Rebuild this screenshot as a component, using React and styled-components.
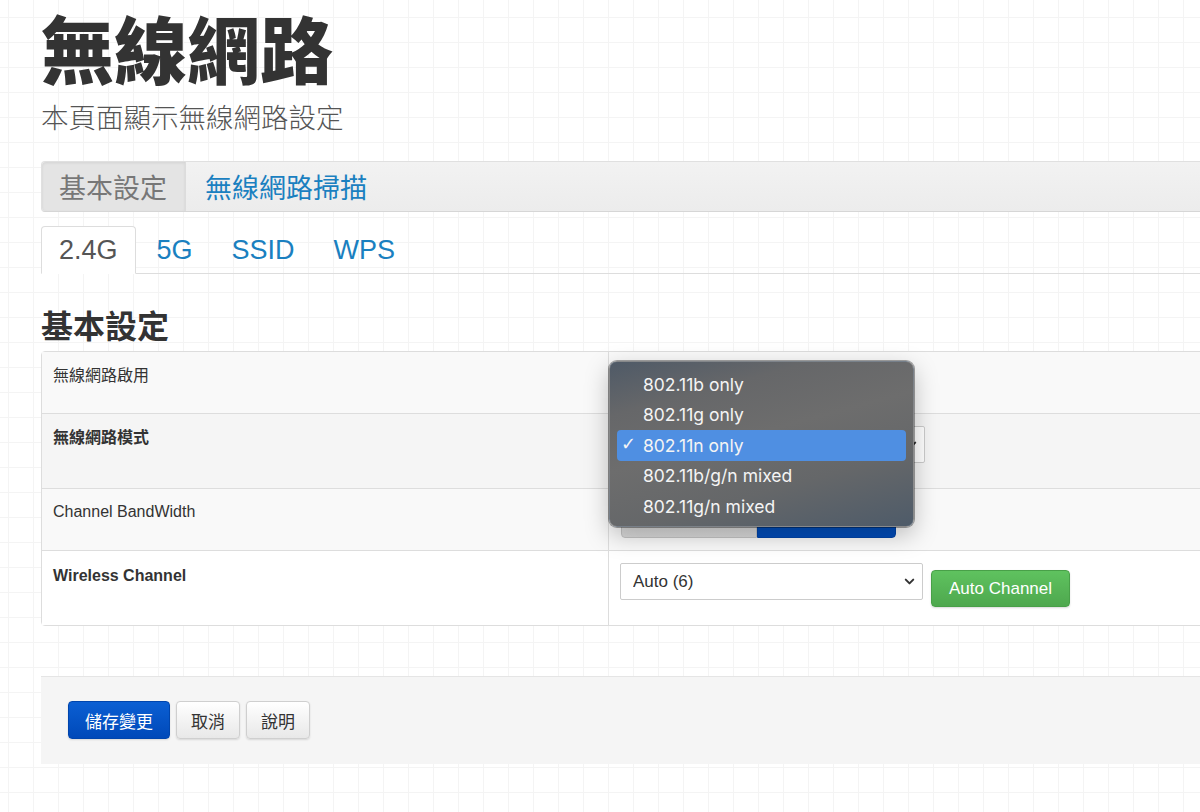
import React from "react";
import styled, { createGlobalStyle } from "styled-components";
import { ChevronDown } from "lucide-react";

const SANS = `"Liberation Sans", "Noto Sans CJK TC", sans-serif`;
const CJK = `"Noto Sans CJK TC", "Liberation Sans", sans-serif`;
const MENU = `Inter, "Noto Sans", "DejaVu Sans", sans-serif`;

const GlobalStyle = createGlobalStyle`
  html, body {
    margin: 0;
    padding: 0;
  }
  body {
    width: 1200px;
    height: 812px;
    overflow: hidden;
    font-family: ${SANS};
    color: #333;
    background-color: #fff;
    background-image:
      linear-gradient(to right, #f4f4f4 1px, transparent 1px),
      linear-gradient(to bottom, #f4f4f4 1px, transparent 1px);
    background-size: 25px 25px;
    background-position: 8px 17px;
  }
  * { box-sizing: border-box; }
`;

const Page = styled.div`
  width: 1240px;
  padding-left: 41px;
  display: flex;
  flex-direction: column;
`;

const Title = styled.h1`
  align-self: flex-start;
  margin: 2px 0 0;
  padding-right: 6px;
  font-family: ${CJK};
  font-size: 73px;
  line-height: 88px;
  font-weight: 900;
  color: #333;
`;

const Subtitle = styled.p`
  align-self: flex-start;
  margin: 9px 0 0;
  font-family: ${CJK};
  font-size: 27.5px;
  line-height: 34px;
  font-weight: 300;
  color: #555;
`;

const Well = styled.div`
  margin-top: 28px;
  height: 51px;
  display: flex;
  align-items: stretch;
  background: linear-gradient(#f2f2f2, #ececec);
  border: 1px solid #e0e0e0;
  border-bottom-color: #d6d6d6;
  border-radius: 4px 0 0 4px;
`;

const Pill = styled.div`
  display: flex;
  align-items: center;
  padding: 0 18px 0 17px;
  margin-right: ${p => (p.$active ? "2px" : "0")};
  font-family: ${CJK};
  font-size: 27px;
  color: ${p => (p.$active ? "#777" : "#1a80c0")};
  background: ${p => (p.$active ? "#e4e4e4" : "transparent")};
  box-shadow: ${p => (p.$active ? "inset 0 1px 3px rgba(0,0,0,0.08)" : "none")};
  border-right: ${p => (p.$active ? "1px solid #dcdcdc" : "none")};
  border-radius: 4px 0 0 4px;
`;

const Tabs = styled.div`
  margin-top: 14px;
  display: flex;
  border-bottom: 1px solid #ddd;
`;

const Tab = styled.div`
  height: 48px;
  margin: 0 3px -1px 0;
  padding: 0 17px;
  display: flex;
  align-items: center;
  font-size: 27px;
  color: ${p => (p.$active ? "#555" : "#1a80c0")};
  background: ${p => (p.$active ? "#fff" : "transparent")};
  border: 1px solid ${p => (p.$active ? "#ddd" : "transparent")};
  border-bottom-color: ${p => (p.$active ? "#fff" : "transparent")};
  border-radius: 4px 4px 0 0;
`;

const SectionTitle = styled.h2`
  margin: 30px 0 0;
  font-family: ${CJK};
  font-size: 32px;
  line-height: 40px;
  font-weight: 700;
  color: #333;
`;

const Table = styled.div`
  position: relative;
  margin-top: 7px;
  width: 1180px;
  border: 1px solid #ddd;
  border-radius: 4px;
`;

const Row = styled.div`
  display: grid;
  grid-template-columns: 566px 1fr;
  min-height: ${p => p.$h}px;
  background: ${p => p.$bg || "#fff"};
  & + & {
    border-top: 1px solid #ddd;
  }
`;

const Label = styled.div`
  padding: ${p => p.$top || 13}px 11px 12px;
  font-size: 16px;
  line-height: 20px;
  font-weight: ${p => (p.$bold ? 700 : 400)};
  color: #333;
`;

const Value = styled.div`
  padding: 12px 11px;
  border-left: 1px solid #ddd;
  display: flex;
  align-items: flex-start;
`;

const SelectWrap = styled.div`
  position: relative;
  width: ${p => p.$w}px;
  height: 37px;
`;

const Select = styled.select`
  appearance: none;
  width: 100%;
  height: 100%;
  padding: 0 12px;
  border: 1px solid #ccc;
  border-radius: 2px;
  background: #fff;
  font-family: ${SANS};
  font-size: 17px;
  color: #333;
`;

const Chevron = styled.span`
  position: absolute;
  right: 6px;
  top: 11px;
  display: flex;
  color: #333;
  pointer-events: none;
`;

const Toggle = styled.div`
  display: flex;
  margin-left: 1px;
`;

const ToggleBtn = styled.div`
  width: ${p => p.$w}px;
  height: 37px;
  background: ${p => (p.$on ? "linear-gradient(#0058cc, #004bb8)" : "linear-gradient(#e6e6e6, #d9d9d9)")};
  border: 1px solid ${p => (p.$on ? "#0044a8" : "#c4c4c4")};
  border-radius: ${p => (p.$first ? "4px 0 0 4px" : "0 4px 4px 0")};
`;

const GreenButton = styled.button`
  margin: 7px 0 0 8px;
  height: 37px;
  padding: 0 17px;
  font-family: ${SANS};
  font-size: 17px;
  color: #fff;
  background: linear-gradient(#5fc25f, #4ea84e);
  border: 1px solid #48a048;
  border-radius: 4px;
  box-shadow: 0 1px 2px rgba(0, 0, 0, 0.15);
`;

const Menu = styled.div`
  position: absolute;
  left: 567px;
  top: 9px;
  width: 305px;
  height: 166px;
  padding: 7px;
  border-radius: 8px;
  background: linear-gradient(165deg, #4f5a67 0%, #666769 22%, #6d6d6d 45%, #656769 70%, #4e5b69 100%);
  border: 1px solid rgba(255, 255, 255, 0.22);
  box-shadow: 0 0 0 1px rgba(0, 0, 0, 0.35), 0 8px 24px rgba(0, 0, 0, 0.25);
`;

const MenuItem = styled.div`
  position: relative;
  height: 30.5px;
  padding-left: 26px;
  display: flex;
  align-items: center;
  font-family: ${MENU};
  font-size: 17.5px;
  color: #f4f4f4;
  border-radius: 4px;
  background: ${p => (p.$selected ? "#4f8fe2" : "transparent")};
`;

const Check = styled.span`
  position: absolute;
  left: 4px;
  top: 3px;
  font-family: "DejaVu Sans", sans-serif;
  font-size: 18px;
  font-weight: 700;
`;

const Actions = styled.div`
  margin-top: 50px;
  width: 1180px;
  height: 88px;
  padding: 24px 27px;
  display: flex;
  gap: 6px;
  background: #f5f5f5;
  border-top: 1px solid #e5e5e5;
`;

const Button = styled.button`
  height: 38px;
  padding: 0 ${p => (p.$primary ? 16 : 14)}px;
  font-family: ${CJK};
  font-size: 17px;
  color: ${p => (p.$primary ? "#fff" : "#333")};
  background: ${p => (p.$primary ? "linear-gradient(#0b5fd3, #0049b9)" : "linear-gradient(#ffffff, #e8e8e8)")};
  border: 1px solid ${p => (p.$primary ? "#0045ad" : "#cfcfcf")};
  border-radius: 4px;
  box-shadow: 0 1px 2px rgba(0, 0, 0, 0.12);
`;

const modes = ["802.11b only", "802.11g only", "802.11n only", "802.11b/g/n mixed", "802.11g/n mixed"];

const Dropdown = ({ w, value }) => (
  <SelectWrap $w={w}>
    <Select defaultValue={value}>
      <option>{value}</option>
    </Select>
    <Chevron>
      <ChevronDown size={15} strokeWidth={3.2} />
    </Chevron>
  </SelectWrap>
);

export default function App() {
  return (
    <>
      <GlobalStyle />
      <Page>
        <Title>無線網路</Title>
        <Subtitle>本頁面顯示無線網路設定</Subtitle>

        <Well>
          <Pill $active>基本設定</Pill>
          <Pill>無線網路掃描</Pill>
        </Well>

        <Tabs>
          <Tab $active>2.4G</Tab>
          <Tab>5G</Tab>
          <Tab>SSID</Tab>
          <Tab>WPS</Tab>
        </Tabs>

        <SectionTitle>基本設定</SectionTitle>

        <Table>
          <Row $h={61} $bg="#f9f9f9">
            <Label $top={14}>無線網路啟用</Label>
            <Value>
              <Toggle>
                <ToggleBtn $w={136} $first />
                <ToggleBtn $w={139} $on />
              </Toggle>
            </Value>
          </Row>
          <Row $h={75} $bg="#f5f5f5">
            <Label $bold $top={14}>無線網路模式</Label>
            <Value>
              <Dropdown w={305} value="802.11n only" />
            </Value>
          </Row>
          <Row $h={62} $bg="#f9f9f9">
            <Label $top={13}>Channel BandWidth</Label>
            <Value>
              <Toggle>
                <ToggleBtn $w={136} $first />
                <ToggleBtn $w={139} $on />
              </Toggle>
            </Value>
          </Row>
          <Row $h={75}>
            <Label $bold $top={15}>Wireless Channel</Label>
            <Value>
              <Dropdown w={303} value="Auto (6)" />
              <GreenButton>Auto Channel</GreenButton>
            </Value>
          </Row>

          <Menu>
            {modes.map(m => (
              <MenuItem key={m} $selected={m === "802.11n only"}>
                {m === "802.11n only" && <Check>✓</Check>}
                {m}
              </MenuItem>
            ))}
          </Menu>
        </Table>

        <Actions>
          <Button $primary>儲存變更</Button>
          <Button>取消</Button>
          <Button>說明</Button>
        </Actions>
      </Page>
    </>
  );
}
